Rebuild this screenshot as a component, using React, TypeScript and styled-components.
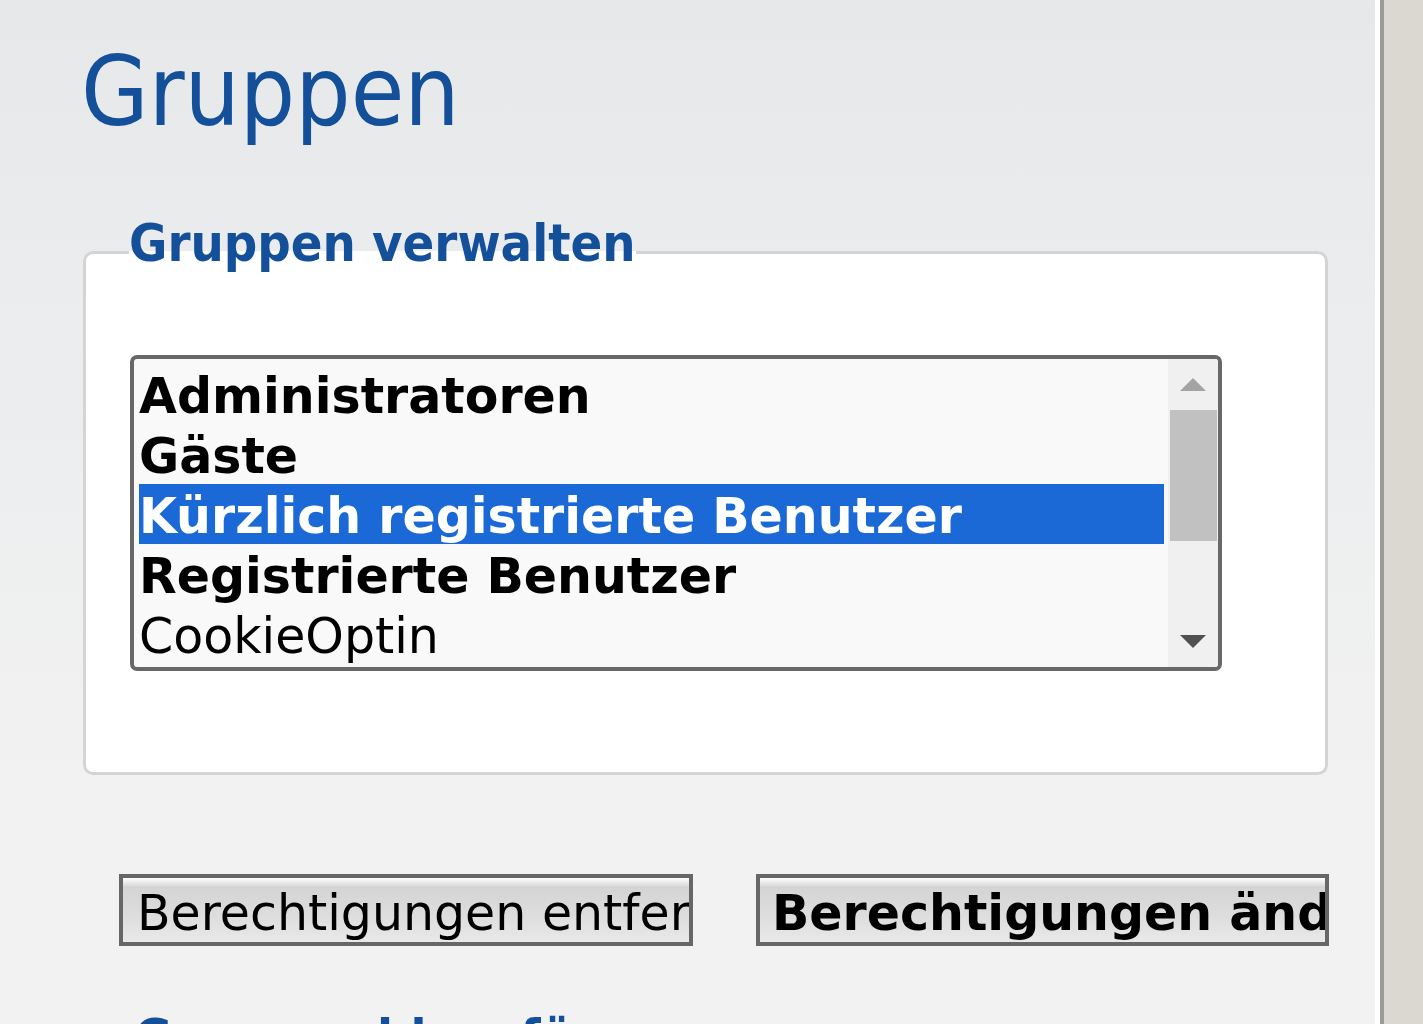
import React from "react";
import styled, { createGlobalStyle } from "styled-components";

const GlobalStyle = createGlobalStyle`
  html, body { margin: 0; padding: 0; }
  body {
    background: #dbd8d2;
    font-family: "DejaVu Sans", "Liberation Sans", sans-serif;
  }
`;

const condensed = `"DejaVu Sans Condensed", "DejaVu Sans", sans-serif`;

const Page = styled.div`
  display: flex;
  min-height: 1024px;
  background: #dbd8d2;
`;

const Panel = styled.main`
  flex: none;
  width: 1384px;
  box-sizing: border-box;
  min-height: 1100px;
  padding: 0 0 0 83px;
  background: linear-gradient(to bottom, #e7e8ea 0px, #edeeef 450px, #f2f2f2 820px, #f2f2f2 100%);
  border-right: 4px solid #9b9b9b;
  box-shadow: inset -5px 0 0 #ffffff;
  overflow: hidden;
`;

const Title = styled.h1`
  margin: 0 0 0 -2px;
  font-family: ${condensed};
  font-stretch: condensed;
  font-weight: normal;
  font-size: 97px;
  line-height: 113px;
  padding-top: 35px;
  color: #14509a;
`;

const Fieldset = styled.fieldset<{ $next?: boolean }>`
  margin: ${(p) => (p.$next ? "66px" : "69px")} 0 0 0;
  width: 1245px;
  min-width: 0;
  box-sizing: border-box;
  border: 3px solid #d4d4d4;
  border-radius: 10px;
  background: #ffffff;
  padding: 0 0 101px ${(p) => (p.$next ? 48 : 43)}px;
`;

const Legend = styled.legend`
  padding: 0 0 18px 0;
  font-family: ${condensed};
  font-stretch: condensed;
  font-weight: bold;
  font-size: 52px;
  line-height: 52px;
  color: #14509a;
`;

const ListBox = styled.div`
  margin: 68px 0 0 1px;
  width: 1092px;
  height: 316px;
  box-sizing: border-box;
  border: 4px solid #686868;
  border-radius: 7px;
  background: #f9f9f9;
  display: flex;
  overflow: hidden;
`;

const OptionList = styled.ul`
  list-style: none;
  margin: 0;
  padding: 5px 4px 0 5px;
  flex: 1;
  min-width: 0;
`;

const Option = styled.li<{ $selected?: boolean; $bold?: boolean }>`
  height: 60px;
  box-sizing: border-box;
  padding: 6px 0 0 0;
  line-height: 54px;
  font-family: "DejaVu Sans", sans-serif;
  font-size: 49px;
  font-weight: ${(p) => (p.$bold ? "bold" : "normal")};
  white-space: nowrap;
  color: ${(p) => (p.$selected ? "#ffffff" : "#000000")};
  background: ${(p) => (p.$selected ? "#1b69d6" : "transparent")};
`;

const ScrollTrack = styled.div`
  flex: none;
  width: 50px;
  background: #f0f0f0;
  display: flex;
  flex-direction: column;
`;

const ArrowBox = styled.div`
  height: 51px;
  display: flex;
  align-items: center;
  justify-content: center;
`;

const Thumb = styled.div`
  height: 131px;
  margin: 0 1px 0 2px;
  background: #c1c1c1;
`;

const Spacer = styled.div`
  flex: 1;
`;

const ButtonRow = styled.div`
  display: flex;
  gap: 63px;
  margin: 99px 0 0 36px;
`;

const Button = styled.button<{ $bold?: boolean }>`
  flex: none;
  width: ${(p) => (p.$bold ? 573 : 574)}px;
  height: 72px;
  box-sizing: border-box;
  margin: 0;
  border: 4px solid #676767;
  border-radius: 0;
  padding: 4px 0 0 ${(p) => (p.$bold ? 12 : 14)}px;
  background: linear-gradient(to bottom, #fdfdfd 0px, #f2f2f2 3px, #d4d4d4 9px, #dedede 40px, #e9e9e9 100%);
  color: #000000;
  font-family: "DejaVu Sans", sans-serif;
  font-weight: ${(p) => (p.$bold ? "bold" : "normal")};
  font-size: 49px;
  line-height: 64px;
  text-align: left;
  white-space: nowrap;
  overflow: hidden;
  display: block;
`;

const UpArrow = () => (
  <svg width="26" height="13" viewBox="0 0 26 13">
    <polygon points="0,13 13,0 26,13" fill="#a3a3a3" />
  </svg>
);

const DownArrow = () => (
  <svg width="26" height="13" viewBox="0 0 26 13">
    <polygon points="0,0 26,0 13,13" fill="#505050" />
  </svg>
);

const groups = [
  { name: "Administratoren", bold: true },
  { name: "Gäste", bold: true },
  { name: "Kürzlich registrierte Benutzer", bold: true, selected: true },
  { name: "Registrierte Benutzer", bold: true },
  { name: "CookieOptin", bold: false },
];

export default function App() {
  return (
    <>
      <GlobalStyle />
      <Page>
        <Panel>
          <Title>Gruppen</Title>
          <Fieldset>
            <Legend>Gruppen verwalten</Legend>
            <ListBox role="listbox">
              <OptionList>
                {groups.map((g) => (
                  <Option key={g.name} $bold={g.bold} $selected={g.selected} role="option">
                    {g.name}
                  </Option>
                ))}
              </OptionList>
              <ScrollTrack>
                <ArrowBox>
                  <UpArrow />
                </ArrowBox>
                <Thumb />
                <Spacer />
                <ArrowBox>
                  <DownArrow />
                </ArrowBox>
              </ScrollTrack>
            </ListBox>
          </Fieldset>
          <ButtonRow>
            <Button>Berechtigungen entfernen</Button>
            <Button $bold>Berechtigungen ändern</Button>
          </ButtonRow>
          <Fieldset $next>
            <Legend>Gruppen hinzufügen</Legend>
          </Fieldset>
        </Panel>
      </Page>
    </>
  );
}
